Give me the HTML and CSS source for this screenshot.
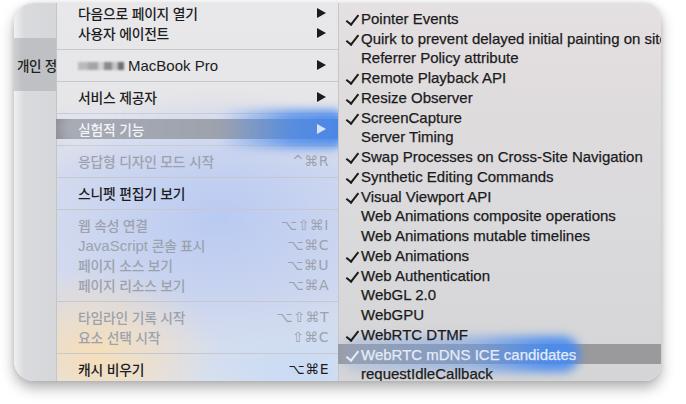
FILE: index.html
```html
<!DOCTYPE html>
<html lang="ko">
<head>
<meta charset="utf-8">
<title>개발자용 메뉴 - 실험적 기능</title>
<link rel="stylesheet" href="styles.css">
</head>
<body>
<div class="card">
  <div class="side">
    <div class="side-top"></div>
    <div class="side-band"><span>개인 정</span></div>
    <div class="side-rest"></div>
  </div>

  <div class="menu">
    <div class="item"><span class="lbl">다음으로 페이지 열기</span><i class="arr"></i></div>
    <div class="item"><span class="lbl">사용자 에이전트</span><i class="arr"></i></div>
    <div class="sep"></div>
    <div class="item"><span class="lbl"><b class="redact"></b><span class="en">MacBook Pro</span></span><i class="arr"></i></div>
    <div class="sep"></div>
    <div class="item"><span class="lbl">서비스 제공자</span><i class="arr"></i></div>
    <div class="sep"></div>
    <div class="item hl"><b class="glow glow-main"></b><span class="lbl">실험적 기능</span><i class="arr"></i></div>
    <div class="sep"></div>
    <div class="item dis"><span class="lbl">응답형 디자인 모드 시작</span><span class="kbd">^⌘R</span></div>
    <div class="sep"></div>
    <div class="item"><span class="lbl">스니펫 편집기 보기</span></div>
    <div class="sep"></div>
    <div class="item dis"><span class="lbl">웹 속성 연결</span><span class="kbd">⌥⇧⌘I</span></div>
    <div class="item dis"><span class="lbl"><span class="en">JavaScript</span> 콘솔 표시</span><span class="kbd">⌥⌘C</span></div>
    <div class="item dis"><span class="lbl">페이지 소스 보기</span><span class="kbd">⌥⌘U</span></div>
    <div class="item dis"><span class="lbl">페이지 리소스 보기</span><span class="kbd">⌥⌘A</span></div>
    <div class="sep"></div>
    <div class="item dis"><span class="lbl">타임라인 기록 시작</span><span class="kbd">⌥⇧⌘T</span></div>
    <div class="item dis"><span class="lbl">요소 선택 시작</span><span class="kbd">⇧⌘C</span></div>
    <div class="sep"></div>
    <div class="item"><span class="lbl">캐시 비우기</span><span class="kbd">⌥⌘E</span></div>
  </div>

  <div class="sub">
    <div class="row on"><i class="ck"></i><span class="t">Pointer Events</span></div>
    <div class="row on"><i class="ck"></i><span class="t">Quirk to prevent delayed initial painting on sites</span></div>
    <div class="row"><i class="ck"></i><span class="t">Referrer Policy attribute</span></div>
    <div class="row on"><i class="ck"></i><span class="t">Remote Playback API</span></div>
    <div class="row on"><i class="ck"></i><span class="t">Resize Observer</span></div>
    <div class="row on"><i class="ck"></i><span class="t">ScreenCapture</span></div>
    <div class="row"><i class="ck"></i><span class="t">Server Timing</span></div>
    <div class="row on"><i class="ck"></i><span class="t">Swap Processes on Cross-Site Navigation</span></div>
    <div class="row on"><i class="ck"></i><span class="t">Synthetic Editing Commands</span></div>
    <div class="row on"><i class="ck"></i><span class="t">Visual Viewport API</span></div>
    <div class="row"><i class="ck"></i><span class="t">Web Animations composite operations</span></div>
    <div class="row"><i class="ck"></i><span class="t">Web Animations mutable timelines</span></div>
    <div class="row on"><i class="ck"></i><span class="t">Web Animations</span></div>
    <div class="row on"><i class="ck"></i><span class="t">Web Authentication</span></div>
    <div class="row"><i class="ck"></i><span class="t">WebGL 2.0</span></div>
    <div class="row"><i class="ck"></i><span class="t">WebGPU</span></div>
    <div class="row on"><i class="ck"></i><span class="t">WebRTC DTMF</span></div>
    <div class="row on hl"><b class="glow glow-sub"></b><i class="ck"></i><span class="t">WebRTC mDNS ICE candidates</span></div>
    <div class="row"><i class="ck"></i><span class="t">requestIdleCallback</span></div>
  </div>
</div>
</body>
</html>
```
FILE: styles.css
```css
* { box-sizing: border-box; }

html, body {
  margin: 0;
  padding: 0;
  background: #ffffff;
  width: 686px;
  height: 404px;
  overflow: hidden;
}

.card {
  margin: 3px 0 0 14px;
  width: 647px;
  height: 378px;
  display: flex;
  border-radius: 20px 16px 16px 20px;
  overflow: hidden;
  box-shadow: 0 7px 14px rgba(0, 0, 0, 0.30), 0 0 5px rgba(0, 0, 0, 0.10);
  font-family: "Noto Sans CJK KR", "Liberation Sans", sans-serif;
}

/* left strip: window behind the menu */
.side {
  width: 42px;
  flex: none;
  display: flex;
  flex-direction: column;
  background: linear-gradient(90deg, #f1f1f2 0, #d9dadd 10px, #d6d7da 100%);
  overflow: hidden;
}
.side-top { height: 35px; flex: none; }
.side-band {
  height: 53px;
  flex: none;
  display: flex;
  align-items: center;
  padding-left: 3px;
  white-space: nowrap;
  background: linear-gradient(90deg, #cfd0d3 0, #bfc0c4 8px);
  font-size: 13.5px;
  font-weight: 500;
  letter-spacing: -0.3px;
  color: #1e1e20;
}
.side-rest { flex: 1; }

/* main menu */
.menu {
  width: 282px;
  flex: none;
  position: relative;
  overflow: hidden;
  display: flex;
  flex-direction: column;
  box-shadow: inset 1px 0 0 #c4c5c9;
  background:
    radial-gradient(ellipse 120px 85px at 40px 350px, rgba(248, 222, 182, 0.95), rgba(248, 222, 182, 0)),
    radial-gradient(ellipse 180px 130px at 165px 215px, rgba(182, 200, 242, 0.9), rgba(182, 200, 242, 0)),
    radial-gradient(ellipse 140px 70px at 240px 370px, rgba(198, 218, 246, 0.85), rgba(198, 218, 246, 0)),
    linear-gradient(180deg, #e8e7e9 0, #e6e5e8 105px, #d5dbee 170px, #d3daee 290px, #dde2ec 378px);
}

.item {
  height: 20px;
  flex: none;
  position: relative;
  display: flex;
  align-items: center;
  justify-content: space-between;
  padding: 0 12px 0 22px;
  white-space: nowrap;
  font-size: 13.8px;
  font-weight: 500;
  letter-spacing: -0.2px;
  color: #1c1c1e;
}
.item .lbl { position: relative; z-index: 1; }
.item .en {
  font-family: "Liberation Sans", sans-serif;
  font-weight: 400;
  font-size: 15px;
  letter-spacing: 0;
}
.item.dis { color: #9ca2ad; }

.redact {
  display: inline-block;
  vertical-align: 1px;
  width: 46px;
  height: 8px;
  margin-right: 4px;
  background: linear-gradient(90deg, #b9b9bb 0 10px, #a5a5a7 10px 20px, #d0d0d2 20px 26px, #8a8a8c 26px 34px, #c4c4c6 34px 40px, #6e6e70 40px 46px);
  filter: blur(0.8px);
}

.arr {
  position: relative;
  z-index: 1;
  width: 0;
  height: 0;
  border-left: 9px solid #1c1c1e;
  border-top: 5px solid transparent;
  border-bottom: 5px solid transparent;
}

.kbd {
  font-family: "DejaVu Sans", sans-serif;
  font-weight: 400;
  font-size: 14px;
  letter-spacing: 0.5px;
  margin-right: -3px;
}

.item.hl {
  background: #8e9096;
  color: #f3f5f9;
}
.item.hl .arr { border-left-color: #d6e4fb; }

.glow { position: absolute; z-index: 0; pointer-events: none; }
.glow-main {
  left: 4px;
  right: -12px;
  top: -9px;
  bottom: -9px;
  border-radius: 20px;
  background: linear-gradient(90deg, rgba(222, 230, 247, 0.32) 0, rgba(205, 218, 245, 0.25) 55%, rgba(78, 140, 236, 0.85) 80%, rgba(66, 132, 238, 0.92) 100%);
  filter: blur(5px);
}

.sep {
  height: 12px;
  flex: none;
  background: linear-gradient(180deg, transparent 6px, #c6c8cf 6px, #c6c8cf 7px, transparent 7px);
}

/* submenu */
.sub {
  flex: 1;
  position: relative;
  overflow: hidden;
  padding-top: 5.5px;
  box-shadow: inset 1px 0 0 #c6c6ca;
  background: linear-gradient(180deg, #e5e0e2 0, #dedbdd 120px, #d9d9db 250px, #d5d5d7 378px);
  font-family: "Liberation Sans", sans-serif;
  font-size: 15px;
  color: #1b1b1c;
  -webkit-text-stroke: 0.25px currentColor;
}
.row {
  height: 19.76px;
  position: relative;
  display: flex;
  align-items: center;
  padding-left: 7px;
  white-space: nowrap;
}
.row .t { position: relative; z-index: 1; }
.ck {
  position: relative;
  z-index: 1;
  width: 16px;
  height: 100%;
  flex: none;
}
.row.on .ck::before {
  content: "";
  position: absolute;
  left: 4px;
  top: 3.5px;
  width: 4.5px;
  height: 11px;
  border-right: 2.2px solid currentColor;
  border-bottom: 2.2px solid currentColor;
  transform: rotate(38deg);
}
.row.hl {
  background: #9a9a9c;
  color: #e4ecfa;
}
.glow-sub {
  left: 2px;
  width: 240px;
  top: -8px;
  bottom: -8px;
  border-radius: 18px;
  background: linear-gradient(90deg, rgba(150, 175, 220, 0.35) 0, rgba(110, 155, 230, 0.55) 55%, rgba(70, 138, 240, 0.9) 85%, rgba(70, 138, 240, 0.9) 100%);
  filter: blur(5px);
}
```
